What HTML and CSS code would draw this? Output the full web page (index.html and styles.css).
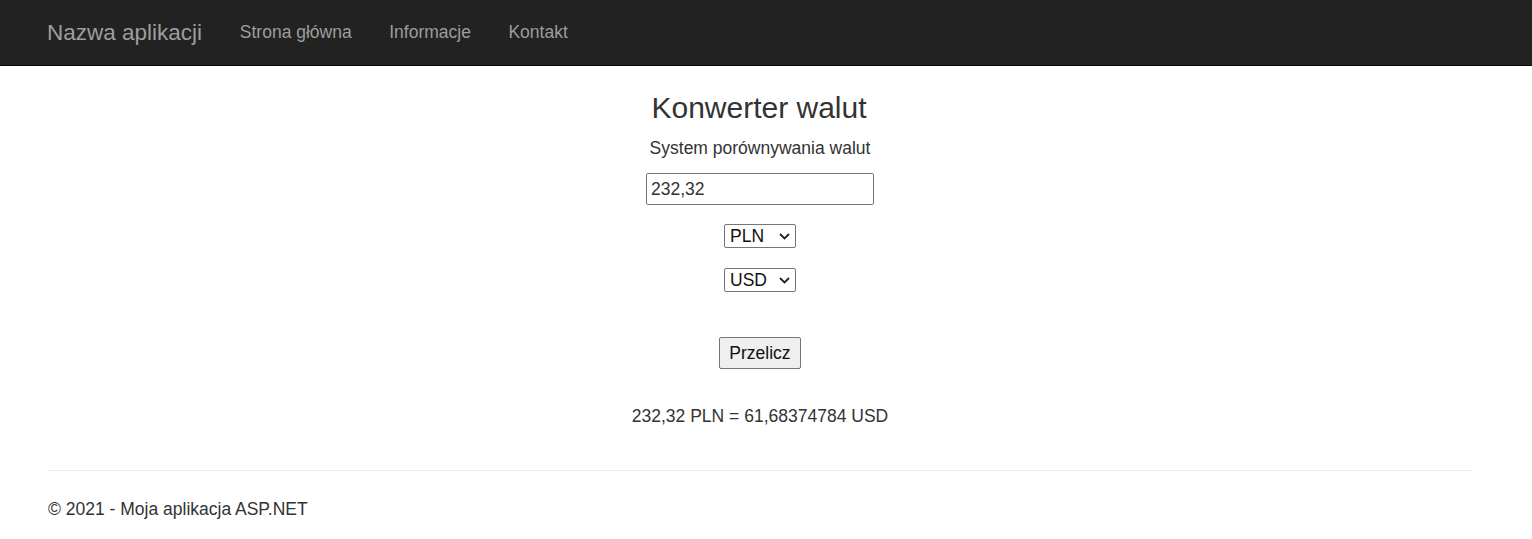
FILE: index.html
```html
<!DOCTYPE html>
<html lang="pl">
<head>
<meta charset="utf-8">
<title>Konwerter walut</title>
<link rel="stylesheet" href="styles.css">
</head>
<body>
<header class="navbar">
  <div class="nav-inner">
    <a class="brand" href="#">Nazwa aplikacji</a>
    <nav class="nav-links">
      <a href="#">Strona główna</a>
      <a href="#">Informacje</a>
      <a href="#">Kontakt</a>
    </nav>
  </div>
</header>
<main class="content">
  <div class="converter">
    <h3 class="title">Konwerter walut</h3>
    <p class="subtitle">System porównywania walut</p>
    <input class="amount" type="text" value="232,32">
    <span class="select-wrap from">
      <select class="currency">
        <option selected>PLN</option>
        <option>USD</option>
        <option>EUR</option>
      </select>
      <svg class="chev" width="11" height="7" viewBox="0 0 11 7"><path d="M1 1 L5.5 5.5 L10 1" fill="none" stroke="#222" stroke-width="1.8"/></svg>
    </span>
    <span class="select-wrap to">
      <select class="currency">
        <option>PLN</option>
        <option selected>USD</option>
        <option>EUR</option>
      </select>
      <svg class="chev" width="11" height="7" viewBox="0 0 11 7"><path d="M1 1 L5.5 5.5 L10 1" fill="none" stroke="#222" stroke-width="1.8"/></svg>
    </span>
    <button class="calc" type="button">Przelicz</button>
    <p class="result">232,32 PLN = 61,68374784 USD</p>
  </div>
  <hr class="divider">
  <footer class="footer">
    <p>© 2021 - Moja aplikacja ASP.NET</p>
  </footer>
</main>
</body>
</html>
```
FILE: styles.css
```css
* { box-sizing: border-box; }
html, body {
  margin: 0;
  padding: 0;
  background: #fff;
}
body {
  font-family: "Liberation Sans", Arial, sans-serif;
  font-size: 17.5px;
  line-height: 25px;
  color: #333;
}
.navbar {
  background: #222;
  border-bottom: 1px solid #080808;
  height: 66px;
}
.nav-inner {
  display: flex;
  align-items: center;
  height: 65px;
  padding-left: 47px;
}
.brand {
  font-size: 22.5px;
  color: #9d9d9d;
  text-decoration: none;
  padding-right: 19px;
}
.nav-links {
  display: flex;
}
.nav-links a {
  color: #9d9d9d;
  text-decoration: none;
  padding: 0 18.75px;
  font-size: 17.5px;
}
.content {
  padding: 0 60px 0 48px;
}
.converter {
  display: flex;
  flex-direction: column;
  align-items: center;
}
.title {
  font-size: 30px;
  line-height: 33px;
  font-weight: 400;
  margin: 25px 0 0;
  transform: translateX(-1px);
}
.subtitle {
  margin: 12px 0 0;
}
.amount {
  margin-top: 12px;
  width: 228px;
  height: 32px;
  font-family: inherit;
  font-size: 17.5px;
  color: #333;
  padding: 1px 4px;
  border: 1px solid #767676;
  border-radius: 2px;
  background: #fff;
}
.select-wrap {
  position: relative;
  display: block;
  width: 72px;
  height: 24px;
}
.select-wrap.from { margin-top: 19px; }
.select-wrap.to { margin-top: 20px; }
.currency {
  appearance: none;
  -webkit-appearance: none;
  display: block;
  width: 72px;
  height: 24px;
  font-family: inherit;
  font-size: 17.5px;
  line-height: 22px;
  color: #111;
  border: 1px solid #767676;
  border-radius: 2px;
  background: #fff;
  padding: 0 0 0 5px;
}
.chev {
  position: absolute;
  right: 6px;
  top: 8.5px;
  pointer-events: none;
}
.calc {
  margin-top: 45px;
  width: 82px;
  height: 32px;
  font-family: inherit;
  font-size: 17.5px;
  color: #111;
  background: #efefef;
  border: 1px solid #767676;
  border-radius: 2px;
  padding: 0;
}
.result {
  margin: 35px 0 0;
}
.divider {
  margin: 41px 0 0;
  border: 0;
  border-top: 1px solid #eee;
}
.footer p {
  margin: 26px 0 0;
}
```
